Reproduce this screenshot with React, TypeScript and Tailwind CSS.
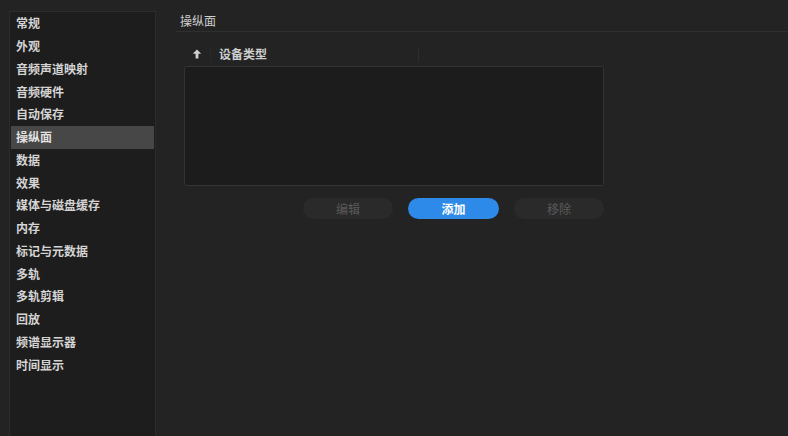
import React from "react";

const items = [
  "常规",
  "外观",
  "音频声道映射",
  "音频硬件",
  "自动保存",
  "操纵面",
  "数据",
  "效果",
  "媒体与磁盘缓存",
  "内存",
  "标记与元数据",
  "多轨",
  "多轨剪辑",
  "回放",
  "频谱显示器",
  "时间显示",
];

export default function App() {
  return (
    <div
      className="w-[788px] h-[436px] bg-[#232323] overflow-hidden flex pl-[9px] pt-[11px]"
      style={{ fontFamily: '"Noto Sans CJK SC", "Noto Sans", sans-serif' }}
    >
      <div className="w-[147px] h-[440px] shrink-0 bg-[#1d1d1d] border border-[#2c2c2c] px-px">
        {items.map((t) => (
          <div
            key={t}
            className={
              "h-[22.75px] flex items-center pl-[5px] text-[12px] font-bold leading-none " +
              (t === "操纵面" ? "bg-[#474747] text-[#e2e2e2]" : "text-[#d4d4d4]")
            }
          >
            {t}
          </div>
        ))}
      </div>
      <div className="flex-1 flex flex-col ml-[20px] -mt-[11px]">
        <div className="h-[32px] border-b border-[#2f2f2f] flex items-center pl-[4px] pt-[12px] pb-[2px] text-[12px] text-[#cfcfcf]">
          操纵面
        </div>
        <div className="pl-[8px] pt-[11px] w-[428px]">
          <div className="h-[23px] flex items-center text-[12px] font-bold text-[#cfcfcf]">
            <div className="w-[26px] flex justify-center pb-[2px]">
              <svg width="10" height="10" viewBox="0 0 10 10" className="text-[#d0d0d0]">
                <path d="M5 0.5 L0.8 4.8 H3.6 V9.5 H6.4 V4.8 H9.2 Z" fill="currentColor" />
              </svg>
            </div>
            <div className="w-px h-[14px] bg-[#2a2a2a]" />
            <div className="w-[207px] pl-[8px] pb-[1px]">设备类型</div>
            <div className="w-px h-[14px] bg-[#2e2e2e]" />
          </div>
          <div className="h-[120px] bg-[#1c1c1c] border border-[#333333] rounded-[2px]" />
          <div className="flex justify-end gap-[15px] mt-[12px]">
            <button className="w-[90px] h-[21px] rounded-full bg-[#2a2a2a] text-[12px] text-[#5a5a5a] leading-none">
              编辑
            </button>
            <button className="w-[91px] h-[21px] rounded-full bg-[#2e8ae8] text-[12px] font-bold text-white leading-none">
              添加
            </button>
            <button className="w-[90px] h-[21px] rounded-full bg-[#2a2a2a] text-[12px] text-[#5a5a5a] leading-none">
              移除
            </button>
          </div>
        </div>
      </div>
    </div>
  );
}
